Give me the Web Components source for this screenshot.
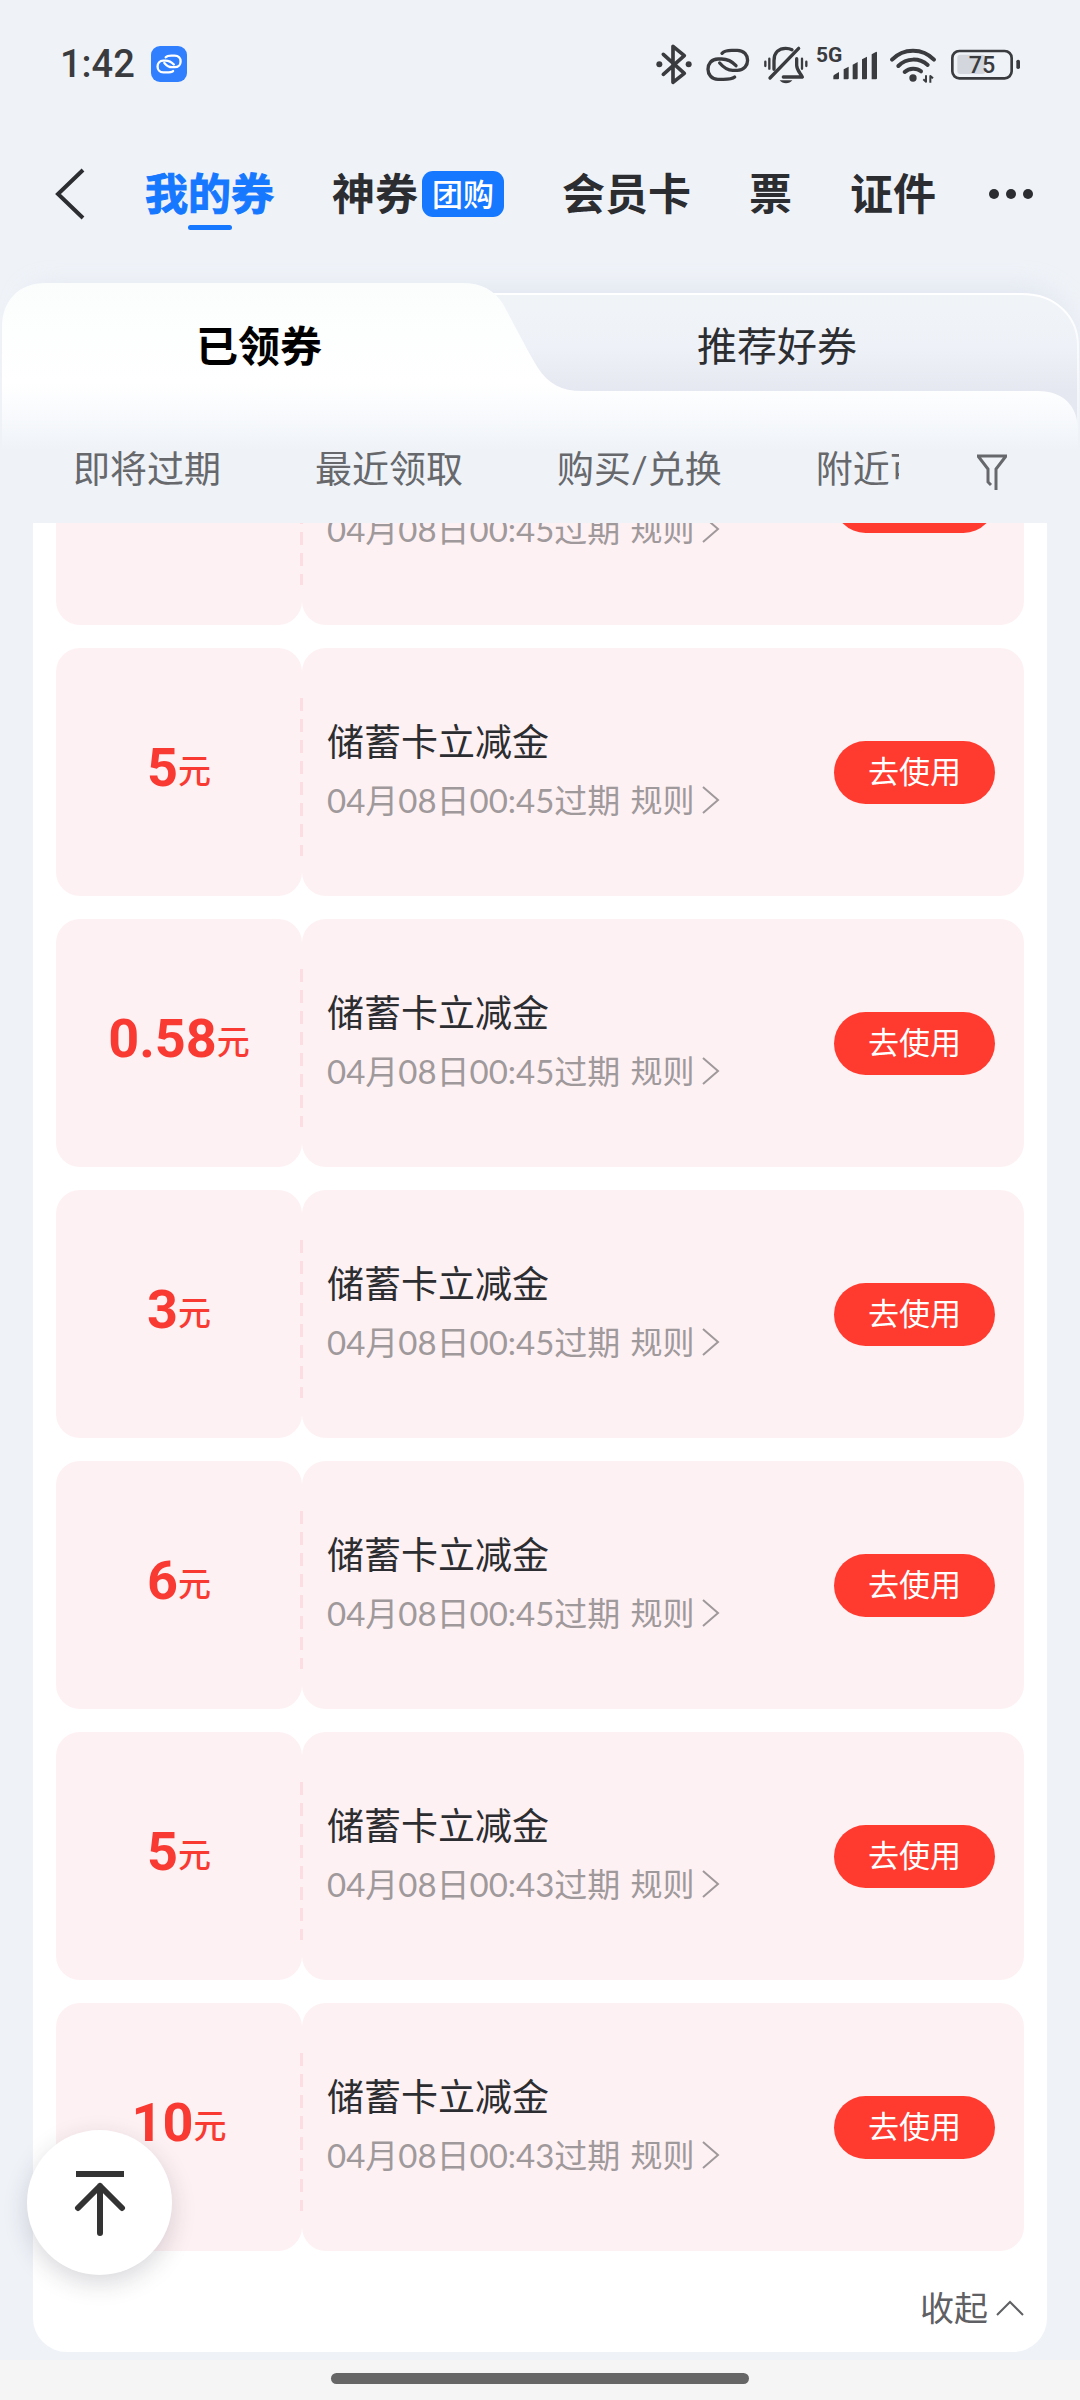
<!DOCTYPE html>
<html lang="zh-CN">
<head>
<meta charset="utf-8">
<meta name="viewport" content="width=device-width, initial-scale=1">
<title>我的券</title>
<style>
  html, body {
    margin: 0;
    height: 100%;
  }

  body {
    font-family: Lato, "Noto Sans CJK SC", sans-serif;
    color: #2b2d31;
    background: #eff3f8;
  }
</style>
</head>
<body>
<coupon-page>
  <status-bar slot="top" time="1:42"></status-bar>
  <page-nav slot="top"></page-nav>
  <coupon-tabs slot="top"></coupon-tabs>
  <filter-bar slot="top"></filter-bar>

  <coupon-card expires="04月08日00:45过期"></coupon-card>
  <coupon-card amount="5" expires="04月08日00:45过期" action="去使用">储蓄卡立减金</coupon-card>
  <coupon-card amount="0.58" expires="04月08日00:45过期" action="去使用">储蓄卡立减金</coupon-card>
  <coupon-card amount="3" expires="04月08日00:45过期" action="去使用">储蓄卡立减金</coupon-card>
  <coupon-card amount="6" expires="04月08日00:45过期" action="去使用">储蓄卡立减金</coupon-card>
  <coupon-card amount="5" expires="04月08日00:43过期" action="去使用">储蓄卡立减金</coupon-card>
  <coupon-card amount="10" expires="04月08日00:43过期" action="去使用">储蓄卡立减金</coupon-card>
</coupon-page>

<script>
const baseStyles = `
  * {
    box-sizing: border-box;
  }

  button {
    padding: 0;
    border: 0;
    background: none;
    font: inherit;
    color: inherit;
    cursor: pointer;
    white-space: nowrap;
  }

  a {
    color: inherit;
    text-decoration: none;
  }

  svg {
    display: block;
    flex: none;
  }
`;

const linkRings = `
  <path d="M246 68C253 60 260 59 275 59H292C333 59 333 119 292 119H278C262 119 250 110 239 97"/>
  <path d="M284 139C276 146 266 146 250 146H234C194 146 194 85 234 85H245C262 85 276 92 288 105"/>
`;

class BaseElement extends HTMLElement {
  constructor() {
    super();
    this.attachShadow({mode: 'open'});
  }

  connectedCallback() {
    this.shadowRoot.innerHTML = `<style>${baseStyles}</style>${this.render()}`;
  }
}

class StatusBar extends BaseElement {
  render() {
    return `
      <style>
        :host {
          display: flex;
          align-items: center;
          justify-content: space-between;
          height: 128px;
          padding: 0 59px 0 60px;
          color: #3a3b3e;
          font-family: Roboto, sans-serif;
        }

        .left, .right {
          display: flex;
          align-items: center;
        }

        .left {
          gap: 16px;
        }

        time {
          font-size: 38px;
          line-height: 48px;
        }

        .app {
          display: grid;
          place-items: center;
          width: 36px;
          height: 36px;
          border-radius: 9px;
          background: #2f7fff;
        }

        .line {
          fill: none;
          stroke: currentColor;
          stroke-width: 10;
          stroke-linecap: round;
          stroke-linejoin: round;
        }

        svg {
          fill: currentColor;
        }

        time, text {
          font-weight: 500;
        }
      </style>
      <div class="left">
        <time>${this.getAttribute('time')}</time>
        <span class="app">
          <svg width="26" height="22" viewBox="196 50 134 105">
            <g class="line" style="stroke: #fff; stroke-width: 12">${linkRings}</g>
          </svg>
        </span>
      </div>
      <div class="right">
        <svg width="45" height="42" viewBox="45 37 135 126">
          <path class="line" style="stroke-width: 11" d="M70 71L133 128L99 155V47L133 75L70 131"/>
          <circle cx="58" cy="101" r="9"/>
          <circle cx="146" cy="101" r="9"/>
        </svg>
        <svg width="56" height="42" viewBox="180 37 168 126">
          <g class="line">${linkRings}</g>
        </svg>
        <svg width="57" height="42" viewBox="348 37 171 126">
          <g class="line">
            <path d="M390 142L476 53"/>
            <path d="M402 116V90C402 64 418 53 437 53C445 53 450 54 456 57"/>
            <path d="M470 84V104C470 119 480 126 487 139H430"/>
            <path d="M376 93V106M388 84V114M486 84V114M499 93V106" style="stroke-width: 7"/>
          </g>
          <path d="M419 149H457C449 161 427 161 419 149Z"/>
        </svg>
        <svg width="71" height="42" viewBox="519 37 213 126">
          <text x="528" y="95" font-size="63" style="font-weight: 700">5G</text>
          <path d="M580 146V137Q580 134 583 132L597 124V143Q597 146 594 146ZM611 146V116L626 108V143Q626 146 623 146ZM638 146V102L653 94V143Q653 146 650 146ZM666 146V86L681 78V143Q681 146 678 146ZM695 146V71L709 63Q711 63 711 66V143Q711 146 708 146Z"/>
        </svg>
        <svg width="59" height="42" viewBox="732 37 177 126">
          <g class="line">
            <path d="M756 87C790 51 848 51 882 87" style="stroke-width: 12"/>
            <path d="M775 106C800 81 838 81 863 103" style="stroke-width: 12"/>
            <path d="M794 124C808 111 830 111 843 122" style="stroke-width: 12"/>
            <path d="M858 134V153L850 146M871 156V136L879 143" style="stroke-width: 6; stroke-linecap: butt"/>
          </g>
          <circle cx="819" cy="142" r="11"/>
        </svg>
        <svg width="78" height="42" viewBox="909 37 234 126">
          <rect x="952" y="72" width="84" height="58" rx="9" fill="#d3d6dc"/>
          <rect class="line" x="937" y="61" width="178" height="82" rx="21" style="stroke-width: 8"/>
          <rect x="1129" y="87" width="11" height="28" rx="5"/>
          <text x="1026" y="128" font-size="70" text-anchor="middle">75</text>
        </svg>
      </div>
    `;
  }
}

class PageNav extends BaseElement {
  render() {
    return `
      <style>
        :host {
          display: block;
        }

        nav {
          display: flex;
          align-items: center;
          gap: 58px;
          height: 132px;
          padding: 0 46px 0 55px;
          font-size: 43px;
          line-height: 60px;
          font-weight: 700;
          white-space: nowrap;
        }

        .back {
          width: 32px;
        }

        .current {
          position: relative;
          color: #1677ff;
          -webkit-text-stroke: 1px #1677ff;
        }

        .current::after {
          content: "";
          position: absolute;
          left: 50%;
          bottom: -6px;
          width: 44px;
          height: 5px;
          margin-left: -22px;
          border-radius: 3px;
          background: #1677ff;
        }

        .with-badge {
          display: flex;
          align-items: center;
          gap: 4px;
        }

        .badge {
          padding: 0 10px;
          border-radius: 11px;
          background: #1677ff;
          color: #fff;
          font-size: 31px;
          line-height: 46px;
          font-weight: 500;
        }

        .more {
          width: 46px;
          margin-left: -6px;
        }
      </style>
      <nav>
        <button class="back" aria-label="返回">
          <svg width="32" height="52" viewBox="0 0 32 52" fill="none" stroke="#2b2d31" stroke-width="4">
            <path d="M28 2L3 26L28 50"/>
          </svg>
        </button>
        <a class="current" href="#mine">我的券</a>
        <a class="with-badge" href="#deals">神券<span class="badge">团购</span></a>
        <a href="#member">会员卡</a>
        <a href="#ticket">票</a>
        <a href="#id">证件</a>
        <button class="more" aria-label="更多">
          <svg width="46" height="12" viewBox="0 0 46 12" fill="#2b2d31">
            <circle cx="6" cy="6" r="5"/>
            <circle cx="23" cy="6" r="5"/>
            <circle cx="40" cy="6" r="5"/>
          </svg>
        </button>
      </nav>
    `;
  }
}

class CouponTabs extends BaseElement {
  render() {
    return `
      <style>
        :host {
          display: block;
          position: relative;
          margin-top: -5px;
          padding-top: 28px;
        }

        /* folder-shaped backdrop shared by both tabs and the filter row */
        .backdrop {
          position: absolute;
          top: 0;
          left: 0;
          width: 100%;
          height: 400px;
        }

        .tabs {
          position: relative;
          display: grid;
          grid-template-columns: 1fr 1fr;
          height: 124px;
          padding: 0 44px 3px 0;
          font-size: 40px;
        }

        [aria-selected="true"] {
          font-size: 42px;
          font-weight: 700;
          color: #000;
        }
      </style>
      <svg class="backdrop" viewBox="0 -5 1080 400" preserveAspectRatio="none">
        <defs>
          <linearGradient id="rear" gradientUnits="userSpaceOnUse" x1="0" y1="33" x2="0" y2="131">
            <stop offset="0" stop-color="#f1f4f7"/>
            <stop offset=".55" stop-color="#eef1f7"/>
            <stop offset="1" stop-color="#e6e8f1"/>
          </linearGradient>
          <linearGradient id="front" gradientUnits="userSpaceOnUse" x1="0" y1="23" x2="0" y2="190">
            <stop offset="0" stop-color="#fbfdfd"/>
            <stop offset=".6" stop-color="#fff"/>
            <stop offset=".72" stop-color="#fbfcfe"/>
            <stop offset="1" stop-color="#eff3f8"/>
          </linearGradient>
          <linearGradient id="edge" x2="0" y2="1">
            <stop offset="0" stop-color="#fff"/>
            <stop offset="1" stop-color="#eff3f8"/>
          </linearGradient>
          <filter id="soft" x="-10%" y="-30%" width="120%" height="160%">
            <feGaussianBlur stdDeviation="12"/>
          </filter>
        </defs>
        <path d="M24 90V54Q24 26 54 26H1030Q1070 36 1076 80V110H24Z" fill="#d8dce8" opacity=".55" filter="url(#soft)"/>
        <path d="M480 34H1022C1055 34 1078 56 1078 86V180H480Z" fill="url(#rear)" stroke="url(#edge)" stroke-width="2"/>
        <path d="M2 380V68C2 41 18 23 46 23H462C482 23 494 30 503 44C512 60 528 92 538 108C548 124 562 131 582 131H1038C1063 131 1078 146 1078 170V380Z" fill="url(#front)"/>
      </svg>
      <div class="tabs" role="tablist">
        <button role="tab" aria-selected="true">已领券</button>
        <button role="tab" aria-selected="false">推荐好券</button>
      </div>
    `;
  }
}

class FilterBar extends BaseElement {
  render() {
    const filters = ['即将过期', '最近领取', '购买/兑换', '附近可用'];

    return `
      <style>
        :host {
          position: relative;
          display: flex;
          align-items: center;
          gap: 78px;
          height: 108px;
          padding: 8px 73px 0;
          color: #66686c;
        }

        .filters {
          flex: 1;
          min-width: 0;
          display: flex;
          gap: 94px;
          overflow: hidden;
          font-size: 37px;
          line-height: 52px;
        }

        .funnel {
          padding-top: 6px;
        }
      </style>
      <div class="filters">
        ${filters.map((name) => `<button>${name}</button>`).join('')}
      </div>
      <button class="funnel" aria-label="筛选">
        <svg width="30" height="38" viewBox="0 0 30 38" fill="none" stroke="#66686c" stroke-width="3">
          <path d="M14 32L11 29V16L1 3H29L19 16V37"/>
        </svg>
      </button>
    `;
  }
}

class CouponCard extends BaseElement {
  render() {
    const amount = this.getAttribute('amount');
    const action = this.getAttribute('action') || '';

    return `
      <style>
        :host {
          display: flex;
          position: relative;
          height: 248px;
        }

        .value, .detail {
          border-radius: 24px;
          background: #fef1f3;
        }

        .value {
          display: flex;
          align-items: center;
          justify-content: center;
          width: 246px;
          color: #f93a33;
        }

        .value strong {
          padding-bottom: 8px;
          font: 700 54px/70px Roboto, sans-serif;
        }

        .value span {
          padding-bottom: 4px;
          font-size: 33px;
          line-height: 40px;
          font-weight: 500;
        }

        .detail {
          flex: 1;
          display: flex;
          align-items: center;
          justify-content: space-between;
          padding: 0 29px 0 25px;
        }

        /* perforation between the two halves */
        .detail::before {
          content: "";
          position: absolute;
          left: 244px;
          top: 50px;
          width: 3px;
          height: 158px;
          background: repeating-linear-gradient(#fcdde2 0 13px, transparent 13px 21px);
        }

        .text {
          padding-bottom: 3px;
        }

        h3 {
          margin: 0;
          min-height: 56px;
          font-size: 37px;
          line-height: 56px;
          font-weight: 400;
        }

        p {
          display: flex;
          align-items: center;
          gap: 10px;
          margin: 2px 0 0;
          font-size: 33px;
          line-height: 56px;
          color: #9f999b;
          white-space: nowrap;
        }

        p a {
          display: flex;
          align-items: center;
          gap: 6px;
          font-size: 32px;
        }

        .use {
          min-width: 161px;
          height: 63px;
          padding: 0 34px 3px;
          border-radius: 32px;
          background: #ff3b30;
          color: #fff;
          font-size: 31px;
          line-height: 60px;
        }
      </style>
      <div class="value">
        ${amount ? `<strong>${amount}</strong><span>元</span>` : ''}
      </div>
      <div class="detail">
        <div class="text">
          <h3><slot></slot></h3>
          <p>
            <span>${this.getAttribute('expires')}</span>
            <a href="#rules">规则
              <svg width="20" height="30" viewBox="0 0 20 30" fill="none" stroke="currentColor" stroke-width="2">
                <path d="M3 2L18 15L3 28"/>
              </svg>
            </a>
          </p>
        </div>
        <button class="use">${action}</button>
      </div>
    `;
  }
}

class CouponPage extends BaseElement {
  render() {
    return `
      <style>
        :host {
          position: relative;
          display: flex;
          flex-direction: column;
          height: 100%;
        }

        /* reversed column keeps the list scrolled to its end */
        main {
          position: relative;
          flex: 1;
          min-height: 0;
          display: flex;
          flex-direction: column-reverse;
          overflow-y: auto;
          scrollbar-width: none;
          padding: 0 33px 8px;
        }

        .panel {
          display: flex;
          flex-direction: column;
          gap: 23px;
          padding: 23px 23px 18px;
          border-radius: 34px;
          background: #fff;
        }

        .collapse {
          display: flex;
          align-items: center;
          align-self: flex-end;
          gap: 8px;
          font-size: 34px;
          line-height: 52px;
          margin-top: 8px;
          color: #5f6063;
        }

        .to-top {
          position: absolute;
          left: 27px;
          bottom: 125px;
          display: grid;
          place-items: center;
          width: 145px;
          height: 145px;
          border-radius: 50%;
          background: #fff;
          box-shadow: 0 8px 24px rgba(40, 40, 60, .18);
        }

        footer {
          display: grid;
          place-items: center;
          height: 40px;
          padding-bottom: 3px;
          background: #f5f5f5;
        }

        .handle {
          width: 418px;
          height: 11px;
          border-radius: 6px;
          background: #666;
        }
      </style>
      <slot name="top"></slot>
      <main>
        <div class="panel">
          <slot></slot>
          <button class="collapse">收起
            <svg width="28" height="16" viewBox="0 0 28 16" fill="none" stroke="currentColor" stroke-width="2">
              <path d="M1 15L14 2L27 15"/>
            </svg>
          </button>
        </div>
      </main>
      <button class="to-top" aria-label="回到顶部">
        <svg width="52" height="66" viewBox="0 0 52 66" fill="none" stroke="#333" stroke-width="6" stroke-linecap="round" stroke-linejoin="round">
          <path d="M2 4H50" stroke-linecap="butt"/>
          <path d="M4 38L26 16L48 38M26 16V63"/>
        </svg>
      </button>
      <footer><div class="handle"></div></footer>
    `;
  }
}

window.customElements.define('status-bar', StatusBar);
window.customElements.define('page-nav', PageNav);
window.customElements.define('coupon-tabs', CouponTabs);
window.customElements.define('filter-bar', FilterBar);
window.customElements.define('coupon-card', CouponCard);
window.customElements.define('coupon-page', CouponPage);
</script>
</body>
</html>
